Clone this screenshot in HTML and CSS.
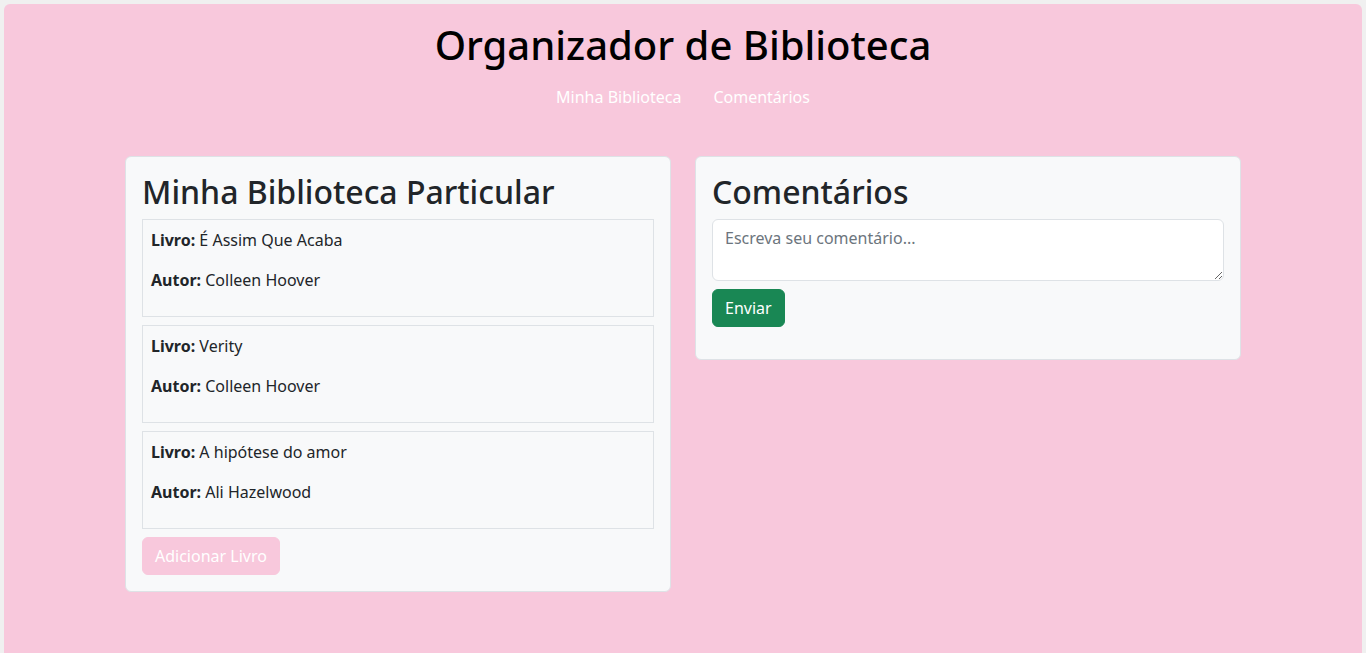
FILE: index.html
```html
<!DOCTYPE html>
<html lang="pt-BR">
<head>
<meta charset="utf-8">
<title>Organizador de Biblioteca</title>
<link rel="stylesheet" href="styles.css">
</head>
<body>
<div class="page">
  <header class="header">
    <h1 class="title">Organizador de Biblioteca</h1>
    <nav class="nav">
      <a class="nav-link" href="#biblioteca">Minha Biblioteca</a>
      <a class="nav-link" href="#comentarios">Comentários</a>
    </nav>
  </header>
  <main class="container">
    <section class="card" id="biblioteca">
      <h2 class="card-title">Minha Biblioteca Particular</h2>
      <div class="book">
        <p><strong>Livro:</strong> É Assim Que Acaba</p>
        <p><strong>Autor:</strong> Colleen Hoover</p>
      </div>
      <div class="book">
        <p><strong>Livro:</strong> Verity</p>
        <p><strong>Autor:</strong> Colleen Hoover</p>
      </div>
      <div class="book">
        <p><strong>Livro:</strong> A hipótese do amor</p>
        <p><strong>Autor:</strong> Ali Hazelwood</p>
      </div>
      <button class="btn btn-pink" type="button">Adicionar Livro</button>
    </section>
    <section class="card card-comments" id="comentarios">
      <h2 class="card-title">Comentários</h2>
      <form class="comment-form">
        <textarea class="form-control" rows="2" placeholder="Escreva seu comentário..."></textarea>
        <button class="btn btn-green" type="button">Enviar</button>
      </form>
    </section>
  </main>
</div>
</body>
</html>
```

FILE: styles.css
```css
* { box-sizing: border-box; }
html, body {
  margin: 0;
  padding: 0;
  background: #f0f0f0;
  height: 100%;
}
body {
  padding: 4px 4px 0 4px;
  font-family: "Noto Sans", "Open Sans", sans-serif;
  font-size: 16px;
  line-height: 1.5;
  color: #212529;
}
.page {
  background: #f8c8dc;
  border-radius: 6px 6px 0 0;
  min-height: 100%;
  padding-top: 17px;
  padding-bottom: 40px;
}
.header {
  display: flex;
  flex-direction: column;
  align-items: center;
}
.title {
  margin: 0 0 8px 0;
  font-size: 40px;
  font-weight: 500;
  line-height: 1.2;
  color: #000;
}
.nav {
  display: flex;
}
.nav-link {
  color: #fff;
  text-decoration: none;
  padding: 8px 16px;
  font-size: 16px;
  line-height: 24px;
}
.container {
  width: 1116px;
  margin: 39px auto 0;
  display: grid;
  grid-template-columns: 1fr 1fr;
  column-gap: 24px;
  align-items: start;
}
.card {
  background: #f8f9fa;
  border: 1px solid #dee2e6;
  border-radius: 6px;
  padding: 16px;
}
.card-title {
  margin: 0 0 8px 0;
  font-size: 32px;
  font-weight: 500;
  line-height: 1.2;
}
.book {
  border: 1px solid #dee2e6;
  padding: 8px;
  margin-bottom: 8px;
}
.book p {
  margin: 0 0 16px 0;
}
.book strong { font-weight: 700; }
.btn {
  display: inline-block;
  font-family: inherit;
  font-size: 16px;
  line-height: 24px;
  padding: 6px 12px;
  border: 1px solid transparent;
  border-radius: 6px;
  color: #fff;
  cursor: pointer;
}
.btn-pink {
  background: #f8c8dc;
  border-color: #f8c8dc;
}
.btn-green {
  background: #198754;
  border-color: #198754;
}
.comment-form {
  display: flex;
  flex-direction: column;
  align-items: flex-start;
  gap: 8px;
  margin-bottom: 16px;
}
.form-control {
  width: 100%;
  display: block;
  font-family: inherit;
  font-size: 16px;
  line-height: 24px;
  padding: 6px 12px;
  border: 1px solid #dee2e6;
  border-radius: 6px;
  background: #fff;
  color: #212529;
  resize: vertical;
  height: 62px;
}
.form-control::placeholder {
  color: #6c757d;
}
```
